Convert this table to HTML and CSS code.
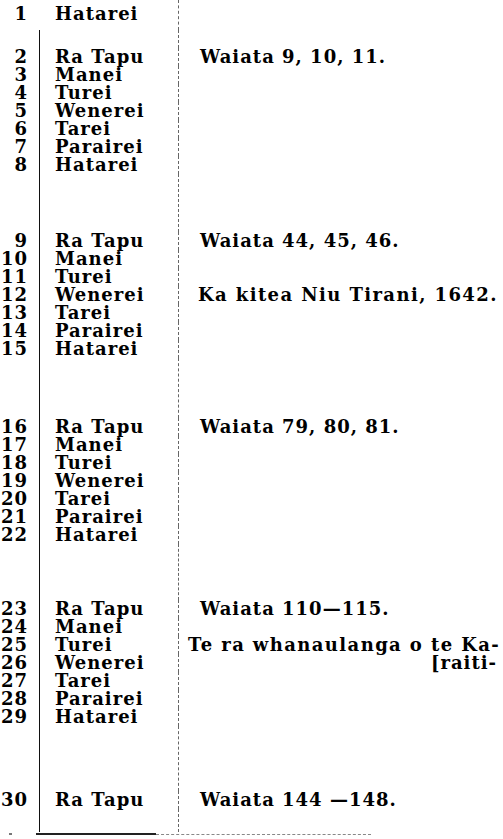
FILE: index.html
```html
<!DOCTYPE html>
<html lang="mi">
<head>
<meta charset="utf-8">
<title>Almanaka</title>
<link rel="stylesheet" href="styles.css">
</head>
<body>
<div class="page">
  <div class="row head"><span class="num">1</span><span class="day">Hatarei</span><span class="note"></span></div>
  <div class="row gap g0"><span class="num"></span><span class="day"></span><span class="note"></span></div>

  <div class="row"><span class="num">2</span><span class="day">Ra Tapu</span><span class="note">Waiata 9, 10, 11.</span></div>
  <div class="row"><span class="num">3</span><span class="day">Manei</span><span class="note"></span></div>
  <div class="row"><span class="num">4</span><span class="day">Turei</span><span class="note"></span></div>
  <div class="row"><span class="num">5</span><span class="day">Wenerei</span><span class="note"></span></div>
  <div class="row"><span class="num">6</span><span class="day">Tarei</span><span class="note"></span></div>
  <div class="row"><span class="num">7</span><span class="day">Parairei</span><span class="note"></span></div>
  <div class="row"><span class="num">8</span><span class="day">Hatarei</span><span class="note"></span></div>
  <div class="row gap g1"><span class="num"></span><span class="day"></span><span class="note"></span></div>

  <div class="row"><span class="num">9</span><span class="day">Ra Tapu</span><span class="note">Waiata 44, 45, 46.</span></div>
  <div class="row"><span class="num">10</span><span class="day">Manei</span><span class="note"></span></div>
  <div class="row"><span class="num">11</span><span class="day">Turei</span><span class="note"></span></div>
  <div class="row"><span class="num">12</span><span class="day">Wenerei</span><span class="note wide">Ka kitea Niu Tirani, 1642.</span></div>
  <div class="row"><span class="num">13</span><span class="day">Tarei</span><span class="note"></span></div>
  <div class="row"><span class="num">14</span><span class="day">Parairei</span><span class="note"></span></div>
  <div class="row"><span class="num">15</span><span class="day">Hatarei</span><span class="note"></span></div>
  <div class="row gap g2"><span class="num"></span><span class="day"></span><span class="note"></span></div>

  <div class="row"><span class="num">16</span><span class="day">Ra Tapu</span><span class="note">Waiata 79, 80, 81.</span></div>
  <div class="row"><span class="num">17</span><span class="day">Manei</span><span class="note"></span></div>
  <div class="row"><span class="num">18</span><span class="day">Turei</span><span class="note"></span></div>
  <div class="row"><span class="num">19</span><span class="day">Wenerei</span><span class="note"></span></div>
  <div class="row"><span class="num">20</span><span class="day">Tarei</span><span class="note"></span></div>
  <div class="row"><span class="num">21</span><span class="day">Parairei</span><span class="note"></span></div>
  <div class="row"><span class="num">22</span><span class="day">Hatarei</span><span class="note"></span></div>
  <div class="row gap g3"><span class="num"></span><span class="day"></span><span class="note"></span></div>

  <div class="row"><span class="num">23</span><span class="day">Ra Tapu</span><span class="note">Waiata 110—115.</span></div>
  <div class="row"><span class="num">24</span><span class="day">Manei</span><span class="note"></span></div>
  <div class="row"><span class="num">25</span><span class="day">Turei</span><span class="note left">Te ra whanaulanga o te Ka-</span></div>
  <div class="row"><span class="num">26</span><span class="day">Wenerei</span><span class="note end">[raiti-</span></div>
  <div class="row"><span class="num">27</span><span class="day">Tarei</span><span class="note"></span></div>
  <div class="row"><span class="num">28</span><span class="day">Parairei</span><span class="note"></span></div>
  <div class="row"><span class="num">29</span><span class="day">Hatarei</span><span class="note"></span></div>
  <div class="row gap g4"><span class="num"></span><span class="day"></span><span class="note"></span></div>

  <div class="row"><span class="num">30</span><span class="day">Ra Tapu</span><span class="note">Waiata 144 —148.</span></div>
  <div class="row gap g5"><span class="num"></span><span class="day"></span><span class="note"></span></div>

  <div class="rule"><span class="dot"></span><span class="solid"></span><span class="dashed"></span></div>
</div>
</body>
</html>
```

FILE: styles.css
```css
html, body {
  margin: 0;
  padding: 0;
  background: #ffffff;
}

body {
  color: #000000;
  font-family: "DejaVu Serif", "Liberation Serif", serif;
  font-weight: bold;
  font-size: 18px;
  line-height: 18px;
}

.page {
  width: 503px;
  height: 839px;
  overflow: hidden;
}

.row {
  display: grid;
  grid-template-columns: 39px 139px 1fr;
  height: 18px;
}

.num {
  text-align: right;
  padding-right: 11px;
  letter-spacing: 1px;
}

.day {
  border-left: 1px solid #111111;
  padding-left: 15px;
  letter-spacing: 1px;
  white-space: nowrap;
}

.note {
  border-left: 1px dashed #666666;
  padding-left: 21px;
  white-space: nowrap;
  letter-spacing: 1px;
}

.note.wide {
  padding-left: 19px;
  letter-spacing: 1.4px;
}

.note.left {
  padding-left: 9px;
  letter-spacing: 1.4px;
}

.note.end {
  text-align: right;
  padding-right: 6px;
}

.row.head {
  height: 30px;
}

.row.head .num,
.row.head .day {
  padding-top: 5px;
}

.row.head .day {
  border-left-color: transparent;
}

.gap.g0 { height: 18px; }
.gap.g1 { height: 58px; }
.gap.g2 { height: 60px; }
.gap.g3 { height: 56px; }
.gap.g4 { height: 65px; }
.gap.g5 { height: 23px; }

.rule {
  display: flex;
  align-items: center;
  height: 4px;
}

.rule .dot {
  width: 3px;
  height: 2px;
  background: #777777;
  margin-left: 9px;
  margin-right: 24px;
}

.rule .solid {
  width: 120px;
  height: 2px;
  background: #222222;
}

.rule .dashed {
  width: 215px;
  border-top: 1px dashed #888888;
}
```
